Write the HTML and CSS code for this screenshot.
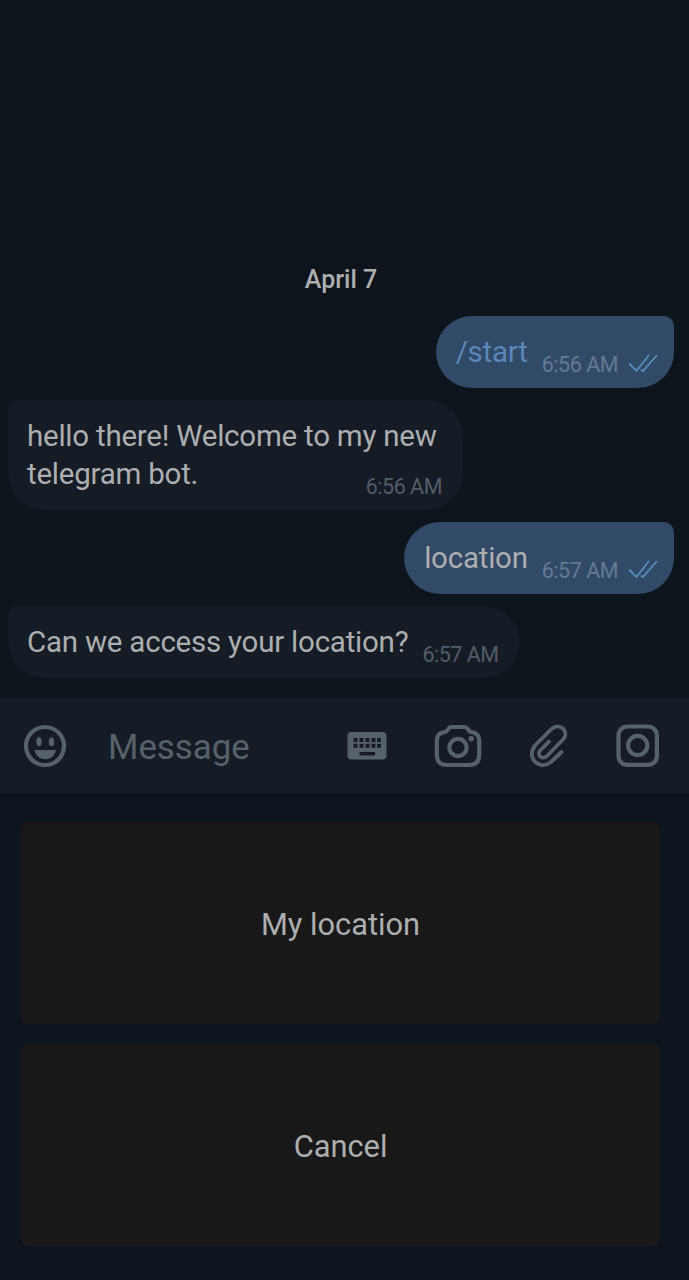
FILE: index.html
```html
<!DOCTYPE html>
<html lang="en">
<head>
<meta charset="utf-8">
<title>Telegram chat</title>
<link rel="stylesheet" href="styles.css">
</head>
<body>
<main class="chat">
  <div class="date">April 7</div>
  <div class="bubble out">
    <span class="text command">/start</span>
    <span class="time">6:56 AM</span>
    <svg class="checks" width="30" height="20" viewBox="0 0 30 20"><path d="M1 10.500 8.500 18 21 2M13 16.500 15 18 29 2"/></svg>
  </div>
  <div class="bubble in">
    <span class="text">hello there! Welcome to my new<br>telegram bot.</span>
    <span class="time tucked">6:56 AM</span>
  </div>
  <div class="bubble out">
    <span class="text">location</span>
    <span class="time">6:57 AM</span>
    <svg class="checks" width="30" height="20" viewBox="0 0 30 20"><path d="M1 10.500 8.500 18 21 2M13 16.500 15 18 29 2"/></svg>
  </div>
  <div class="bubble in">
    <span class="text">Can we access your location?</span>
    <span class="time">6:57 AM</span>
  </div>
</main>
<div class="composer">
  <svg class="icon smile" width="44" height="44" viewBox="0 0 44 44">
    <circle class="line" cx="22" cy="22" r="19"/>
    <ellipse cx="16" cy="17.800" rx="2.700" ry="4.500"/><ellipse cx="28.500" cy="17.800" rx="2.700" ry="4.500"/>
    <path d="M11.500 26h21.500c-1 5.500-5 9.200-10.700 9.200S12.500 31.500 11.500 26z"/>
  </svg>
  <span class="placeholder">Message</span>
  <svg class="icon keyboard" width="40" height="28" viewBox="0 0 40 28">
    <path fill-rule="evenodd" d="M4.500 0h31A4 4 0 0 1 39.500 4v19.500a4 4 0 0 1-4 4h-31a4 4 0 0 1-4-4V4a4 4 0 0 1 4-4zM6.500 6v4h4V6zM12.500 6v4h4V6zM18.500 6v4h4V6zM24.500 6v4h4V6zM30 6v4h4V6zM6.500 11.800v4h4v-4zM12.500 11.800v4h4v-4zM18.500 11.800v4h4v-4zM24.500 11.800v4h4v-4zM30 11.800v4h4v-4zM12.500 20v3.500h15.500V20z"/>
  </svg>
  <svg class="icon camera" width="48" height="44" viewBox="0 0 48 44">
    <path class="line" d="M17 3h14c2.500 0 3.500 4.500 6 5 5 .5 8.200 3.500 8.200 8.500v14c0 7-3.200 10.500-10 10.500H13C6 41 2.800 37.500 2.800 30.500v-14c0-5 3.200-8 8.200-8.500 2.500-.5 3.500-5 6-5z"/>
    <circle class="line" cx="24" cy="23.500" r="8.600"/><circle cx="37.200" cy="14.700" r="2.700"/>
  </svg>
  <svg class="icon clip" width="40" height="44" viewBox="0 0 40 44">
    <path class="line" d="M20 17.500 11.500 26.200C7 31 13 36.500 18 32L34 15.500C41 7.500 31-1.500 23 4.500L6.500 21C-4 33 10 47.500 22 38L32.500 28"/>
  </svg>
  <svg class="icon video" width="44" height="44" viewBox="0 0 44 44">
    <rect class="line" x="2.500" y="2.500" width="38.400" height="38.400" rx="9"/><circle class="line" cx="21.700" cy="21.500" r="9.600"/>
  </svg>
</div>
<div class="keys">
  <div class="key">My location</div>
  <div class="key">Cancel</div>
</div>
</body>
</html>
```
FILE: styles.css
```css
* { box-sizing: border-box; }
body {
  margin: 0;
  width: 689px;
  height: 1280px;
  display: flex;
  flex-direction: column;
  background: #0e141b;
  color: #acaeb0;
  font-family: Roboto, "Liberation Sans", sans-serif;
}
.chat {
  height: 698px;
  padding: 0 15px 20px 8px;
  display: flex;
  flex-direction: column;
  justify-content: flex-end;
  align-items: flex-start;
  gap: 12px;
}
.date {
  align-self: center;
  font-size: 25px;
  font-weight: 500;
  line-height: 32px;
  margin-bottom: 8px;
}
.bubble {
  display: flex;
  align-items: flex-end;
  min-height: 72px;
  padding: 17px 21px 17px 19px;
}
.in {
  background: #151c25;
  border-radius: 10px 36px 36px 36px;
}
.out {
  align-self: flex-end;
  background: #314a67;
  border-radius: 36px 10px 36px 36px;
  padding-right: 16px;
  padding-left: 20px;
}
.text {
  font-size: 29.500px;
  line-height: 38px;
  letter-spacing: -0.230px;
  white-space: nowrap;
}
.command { color: #5987b8; }
.time {
  margin-left: 14px;
  margin-bottom: -10px;
  font-size: 21.500px;
  line-height: 32px;
  letter-spacing: -0.480px;
  color: #525d67;
  white-space: nowrap;
}
.out .time { color: #637a90; }
.tucked { margin-left: -71px; }
.checks {
  margin: 0 0 -2px 10px;
  fill: none;
  stroke: #568fbd;
  stroke-width: 1.800;
}
.composer {
  height: 95px;
  display: flex;
  align-items: center;
  padding: 0 29px 0 23px;
  background: #161c26;
}
.icon { flex: none; fill: #566169; }
.line {
  fill: none;
  stroke: #566169;
  stroke-width: 4.200;
  stroke-linecap: round;
  stroke-linejoin: round;
}
.placeholder {
  margin-left: 41px;
  flex: 1;
  font-size: 34.800px;
  line-height: 44px;
  padding-top: 2px;
  color: #566169;
}
.camera { margin-left: 47px; }
.clip { margin-left: 47px; }
.video { margin-left: 47px; }
.clip .line { stroke-width: 3.800; }
.keys {
  flex: 1;
  display: flex;
  flex-direction: column;
  gap: 20px;
  padding: 29px 29px 34px 21px;
  background: #0e141d;
}
.key {
  flex: 1;
  display: flex;
  align-items: center;
  justify-content: center;
  padding-top: 2px;
  border-radius: 7px;
  background: #181818;
  font-size: 30.800px;
}
```
